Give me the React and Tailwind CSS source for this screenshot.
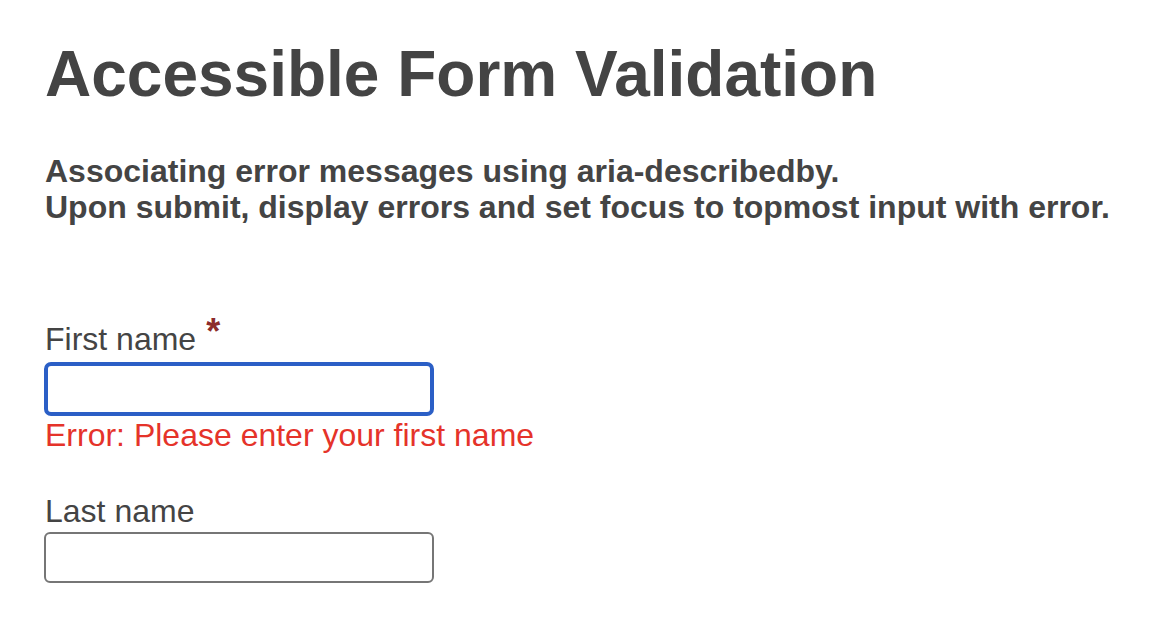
export default function App() {
  return (
    <div className="min-h-screen bg-white pl-[45px] pt-[38px] text-[#444444] font-['Liberation_Sans',Arial,sans-serif]">
      <h1 className="text-[64px] leading-[72px] font-bold">Accessible Form Validation</h1>

      <p className="mt-[43px] text-[32px] leading-[36px] font-bold">
        Associating error messages using aria-describedby.
        <br />
        Upon submit, display errors and set focus to topmost input with error.
      </p>

      <form className="mt-[96px]" noValidate>
        <div>
          <label htmlFor="first" className="block text-[32px] leading-[36px]">
            First name
            <span className="relative -top-[6px] ml-[10px] text-[36px] leading-[0] font-bold text-[#8c2b2b]">*</span>
          </label>
          <input
            id="first"
            type="text"
            aria-describedby="first-error"
            className="-ml-[1px] mt-[5px] block h-[54px] w-[390px] rounded-[7px] border-4 border-[#2b5fc6] bg-white outline-none"
          />
          <div id="first-error" className="mt-[1px] text-[32px] leading-[36px] text-[#e5332a]">
            Error: Please enter your first name
          </div>
        </div>

        <div className="mt-[40px]">
          <label htmlFor="last" className="block text-[32px] leading-[36px]">
            Last name
          </label>
          <input
            id="last"
            type="text"
            className="-ml-[1px] mt-[3px] block h-[51px] w-[390px] rounded-[6px] border-2 border-[#767676] bg-white outline-none"
          />
        </div>
      </form>
    </div>
  )
}
